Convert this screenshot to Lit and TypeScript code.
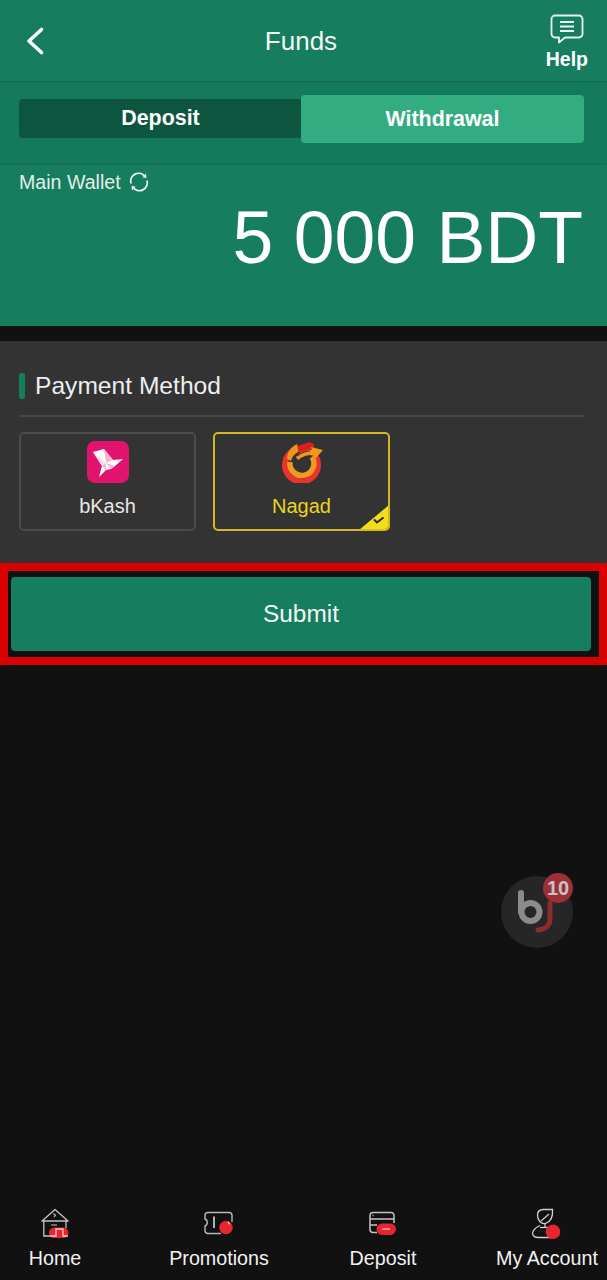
import { LitElement, html, css, svg } from "lit";
import { customElement } from "lit/decorators.js";

const homeIcon = svg`<svg class="nav-icon" viewBox="0 0 40 40" width="40" height="40" fill="none">
  <path d="M7 16 20 4.500 33 16H7Z" stroke="#c4c4c4" stroke-width="1.300" stroke-linejoin="round"/>
  <path d="M8.800 16V31H16M31 16V23" stroke="#c4c4c4" stroke-width="1.300"/>
  <path d="M18.500 8.500l2 1.800-1.500 1.700M16 20h6" stroke="#c4c4c4" stroke-width="1.100"/>
  <rect x="14" y="22.500" width="19.500" height="10.500" rx="5.200" fill="#e5252f"/>
  <path d="M15 31h6v-7h7v7h5" stroke="#f6c9c9" stroke-width="1.300"/>
</svg>`;

const promoIcon = svg`<svg class="nav-icon" viewBox="0 0 40 40" width="40" height="40" fill="none">
  <path d="M9 7.500h21a3 3 0 0 1 3 3V17M9 7.500a3 3 0 0 0-3 3v3.500c3 1 3 6 0 7v4.500a3 3 0 0 0 3 3h13" stroke="#b9b9b9" stroke-width="1.400"/>
  <path d="M15 11.500v11.500" stroke="#b9b9b9" stroke-width="1.900"/>
  <circle cx="27" cy="22.500" r="6.800" fill="#e5252f"/>
  <path d="M29 16.800l1.500 2.500" stroke="#f6c9c9" stroke-width="1.300"/>
</svg>`;

const depositIcon = svg`<svg class="nav-icon" viewBox="0 0 40 40" width="40" height="40" fill="none">
  <path d="M14 27.500h-4a3 3 0 0 1-3-3V10.500a3 3 0 0 1 3-3h18a3 3 0 0 1 3 3V18" stroke="#c4c4c4" stroke-width="1.500"/>
  <path d="M7 14h24M7 20h7M9.500 10.500h1" stroke="#c4c4c4" stroke-width="1.400"/>
  <rect x="13.500" y="18.500" width="19.500" height="11.500" rx="5.700" fill="#e5252f"/>
  <path d="M19 24h8" stroke="#f6a9a9" stroke-width="1.500"/>
</svg>`;

const accountIcon = svg`<svg class="nav-icon" viewBox="0 0 40 40" width="40" height="40" fill="none">
  <path d="M10.500 10c0-3.500 2.500-5.500 6-5.500h9c.5 6-1 12-7 14-4.500 1-8-3.500-8-8.500Z" stroke="#d0d0d0" stroke-width="1.300"/>
  <path d="M14 16 22 9M18 18.500v4" stroke="#d0d0d0" stroke-width="1.200"/>
  <path d="M13 20.500C7 23 4.500 27 6 30c1 2 3 2.500 5 2.500h14" stroke="#d0d0d0" stroke-width="1.300"/>
  <path d="M13 22.500h9" stroke="#d0d0d0" stroke-width="1.300"/>
  <circle cx="26" cy="26.800" r="7.300" fill="#e5252f"/>
</svg>`;

@customElement("app-root")
export class AppRoot extends LitElement {
  static styles = css`
    :host {
      display: flex;
      flex-direction: column;
      width: 607px;
      height: 1280px;
      background: #111111;
      font-family: "Liberation Sans", Arial, sans-serif;
      color: #fff;
      overflow: hidden;
    }
    .header {
      height: 81px;
      flex: none;
      display: flex;
      align-items: center;
      justify-content: space-between;
      padding: 0 19px 0 22px;
      background: #167d5e;
      border-bottom: 1px solid #116a4f;
      position: relative;
    }
    .back { display: block; }
    .title {
      position: absolute;
      left: 0;
      right: 5px;
      top: 26px;
      text-align: center;
      font-size: 26px;
      line-height: 30px;
      color: #f2f7f5;
      pointer-events: none;
    }
    .help {
      display: flex;
      flex-direction: column;
      align-items: center;
      gap: 3px;
      font-size: 19.500px;
      line-height: 22px;
      font-weight: 700;
      margin-top: 2px;
    }
    .help svg { display: block; }
    .tabs-band {
      height: 81px;
      flex: none;
      box-sizing: border-box;
      display: flex;
      align-items: center;
      padding: 0 23px 7px 19px;
      background: #157a5c;
      box-shadow: 0 1px 3px rgba(0, 0, 0, 0.18);
      position: relative;
    }
    .tab {
      flex: 1;
      display: flex;
      align-items: center;
      justify-content: center;
      font-weight: 700;
      font-size: 21.400px;
    }
    .tab-off {
      height: 39px;
      background: #0d553f;
      border-radius: 4px 0 0 4px;
      margin-right: -1px;
      margin-bottom: 2px;
    }
    .tab-on {
      height: 48px;
      background: #33ac82;
      border-radius: 4px;
    }
    .wallet {
      height: 163px;
      flex: none;
      box-sizing: border-box;
      background: #167d5e;
      padding: 7px 24px 0 19px;
    }
    .wallet-label {
      display: flex;
      align-items: center;
      gap: 8px;
      font-size: 19.600px;
      line-height: 24px;
      color: #e3efeb;
    }
    .balance {
      text-align: right;
      font-size: 73.300px;
      line-height: 84px;
      margin-top: 2px;
      white-space: nowrap;
    }
    .panel {
      height: 222px;
      flex: none;
      box-sizing: border-box;
      margin-top: 15px;
      background: #333333;
      padding: 30px 23px 0 19px;
    }
    .section-title {
      display: flex;
      align-items: center;
      gap: 10px;
      height: 30px;
      font-size: 24.600px;
      color: #eeeeee;
    }
    .section-title::before {
      content: "";
      width: 6px;
      height: 26px;
      border-radius: 2px;
      background: #167d5e;
    }
    .rule {
      height: 2px;
      background: #484848;
      margin-top: 14px;
    }
    .methods {
      display: flex;
      gap: 17px;
      margin-top: 15px;
    }
    .method {
      position: relative;
      width: 177px;
      height: 99px;
      box-sizing: border-box;
      border: 2px solid #4c4c4c;
      border-radius: 5px;
      display: flex;
      flex-direction: column;
      align-items: center;
      padding-top: 7px;
      font-size: 20px;
      line-height: 24px;
      color: #e6e6e6;
      overflow: hidden;
    }
    .method svg.logo { display: block; height: 42px; width: 42px; margin-bottom: 11px; flex: none; }
    .method.selected {
      border-color: #d2b91f;
      color: #ecd41f;
    }
    .corner {
      position: absolute;
      right: -1px;
      bottom: -1px;
      display: block;
    }
    .frame {
      flex: none;
      height: 102px;
      box-sizing: border-box;
      border: 8px solid #d90000;
      padding: 6px 8px 6px 3px;
    }
    .submit {
      height: 74px;
      border-radius: 4px;
      background: #167d5e;
      display: flex;
      align-items: center;
      justify-content: center;
      font-size: 24.400px;
      color: #f3f8f6;
    }
    .spacer { flex: 1; position: relative; }
    .chat {
      position: absolute;
      left: 500px;
      top: 208px;
      display: block;
    }
    .nav {
      flex: none;
      height: 85px;
      display: grid;
      grid-template-columns: repeat(4, 110px);
      column-gap: 54px;
      background: #111111;
    }
    .nav-item {
      display: flex;
      flex-direction: column;
      align-items: center;
      padding-top: 10px;
      font-size: 19.700px;
      line-height: 24px;
      white-space: nowrap;
      color: #f2f2f2;
    }
    .nav-icon { display: block; flex: none; margin-bottom: 1px; }
  `;

  render() {
    return html`
      <div class="header">
        <svg class="back" width="24" height="34" viewBox="0 0 24 34" fill="none">
          <path d="M19.500 5.500 7 17l12.500 11.500" stroke="#fff" stroke-width="3.600" stroke-linecap="round" stroke-linejoin="round"/>
        </svg>
        <div class="title">Funds</div>
        <div class="help">
          <svg width="34" height="31" viewBox="0 0 34 31" fill="none">
            <path d="M5 1.500h24a3.500 3.500 0 0 1 3.500 3.500v15a3.500 3.500 0 0 1-3.500 3.500H15l-6 5v-5H5A3.500 3.500 0 0 1 1.500 20V5A3.500 3.500 0 0 1 5 1.500Z" stroke="#eaf4f0" stroke-width="1.800" stroke-linejoin="round"/>
            <path d="M10 8h14M10 12.500h14M10 17h14" stroke="#eaf4f0" stroke-width="1.800"/>
          </svg>
          <span>Help</span>
        </div>
      </div>
      <div class="tabs-band">
        <div class="tab tab-off">Deposit</div>
        <div class="tab tab-on">Withdrawal</div>
      </div>
      <div class="wallet">
        <div class="wallet-label">
          <span>Main Wallet</span>
          <svg width="20" height="20" viewBox="0 0 20 20" fill="none">
            <path d="M2 11.500A8 8 0 0 1 15.500 3.800M18 8.500A8 8 0 0 1 4.500 16.200" stroke="#eef6f3" stroke-width="1.800"/>
            <path d="M13.500 5.500 17.500 6 17 1.500M6.500 14.500 2.500 14 3 18.500" fill="#eef6f3"/>
          </svg>
        </div>
        <div class="balance">5 000 BDT</div>
      </div>
      <div class="panel">
        <div class="section-title">Payment Method</div>
        <div class="rule"></div>
        <div class="methods">
          <div class="method">
            <svg class="logo" viewBox="0 0 42 42">
              <rect width="42" height="42" rx="8" fill="#e2136e"/>
              <path d="M6 11 17 8 26 19 36 18 28 25 24 28 19 29 12 36 15 25Z" fill="#fff"/>
              <path d="M17 8 19 22 26 19ZM15 25 19 22 19 29ZM19 22 28 25 24 28Z" fill="#f5b6d2"/>
              <path d="M6 11 19 22 15 25Z" fill="#fbdfeb"/>
            </svg>
            <span>bKash</span>
          </div>
          <div class="method selected">
            <svg class="logo" viewBox="0 0 42 42">
              <circle cx="20.500" cy="24" r="16.500" fill="none" stroke="#e8352b" stroke-width="6"/>
              <path d="M9 21a12 12 0 1 0 22-5" fill="none" stroke="#f09a1e" stroke-width="5.500"/>
              <path d="M6 18C6 11 10 6 16 3l1 8c-4 2-6 5-7 9Z" fill="#f0941d"/>
              <path d="M17 5 28 1l5 2v7l-14 3Z" fill="#d9201f"/>
              <path d="M15 16c4-5 9-7 16-7l-1-3 12 3-8 9-2-4c-6 0-10 1-15 5Z" fill="#f0981e"/>
              <path d="M16 15c4-3 8-5 13-5" fill="none" stroke="#5a2a10" stroke-width="1.200"/>
            </svg>
            <span>Nagad</span>
            <svg class="corner" width="30" height="25" viewBox="0 0 30 25">
              <path d="M30 0V21a4 4 0 0 1-4 4H0Z" fill="#f2dc1c"/>
              <path d="M15 14.500 18 17.500 24.500 12.500" fill="none" stroke="#2a2a2a" stroke-width="2"/>
            </svg>
          </div>
        </div>
      </div>
      <div class="frame"><div class="submit">Submit</div></div>
      <div class="spacer">
        <svg class="chat" width="76" height="76" viewBox="0 0 76 76">
          <circle cx="37" cy="39" r="36" fill="#262626"/>
          <path d="M21 20V39" stroke="#8b8b8b" stroke-width="6" stroke-linecap="round"/>
          <circle cx="30.500" cy="39" r="9" fill="none" stroke="#8b8b8b" stroke-width="6"/>
          <path d="M50 30V46c0 7-4 10-12 11" fill="none" stroke="#8f2a2e" stroke-width="5" stroke-linecap="round"/>
          <circle cx="58" cy="15" r="15" fill="#9c3036"/>
          <text x="58" y="22" text-anchor="middle" font-family="Liberation Sans" font-weight="700" font-size="20" fill="#c4c4c4">10</text>
        </svg>
      </div>
      <div class="nav">
        <div class="nav-item">${homeIcon}<span>Home</span></div>
        <div class="nav-item">${promoIcon}<span>Promotions</span></div>
        <div class="nav-item">${depositIcon}<span>Deposit</span></div>
        <div class="nav-item">${accountIcon}<span>My Account</span></div>
      </div>
    `;
  }
}
